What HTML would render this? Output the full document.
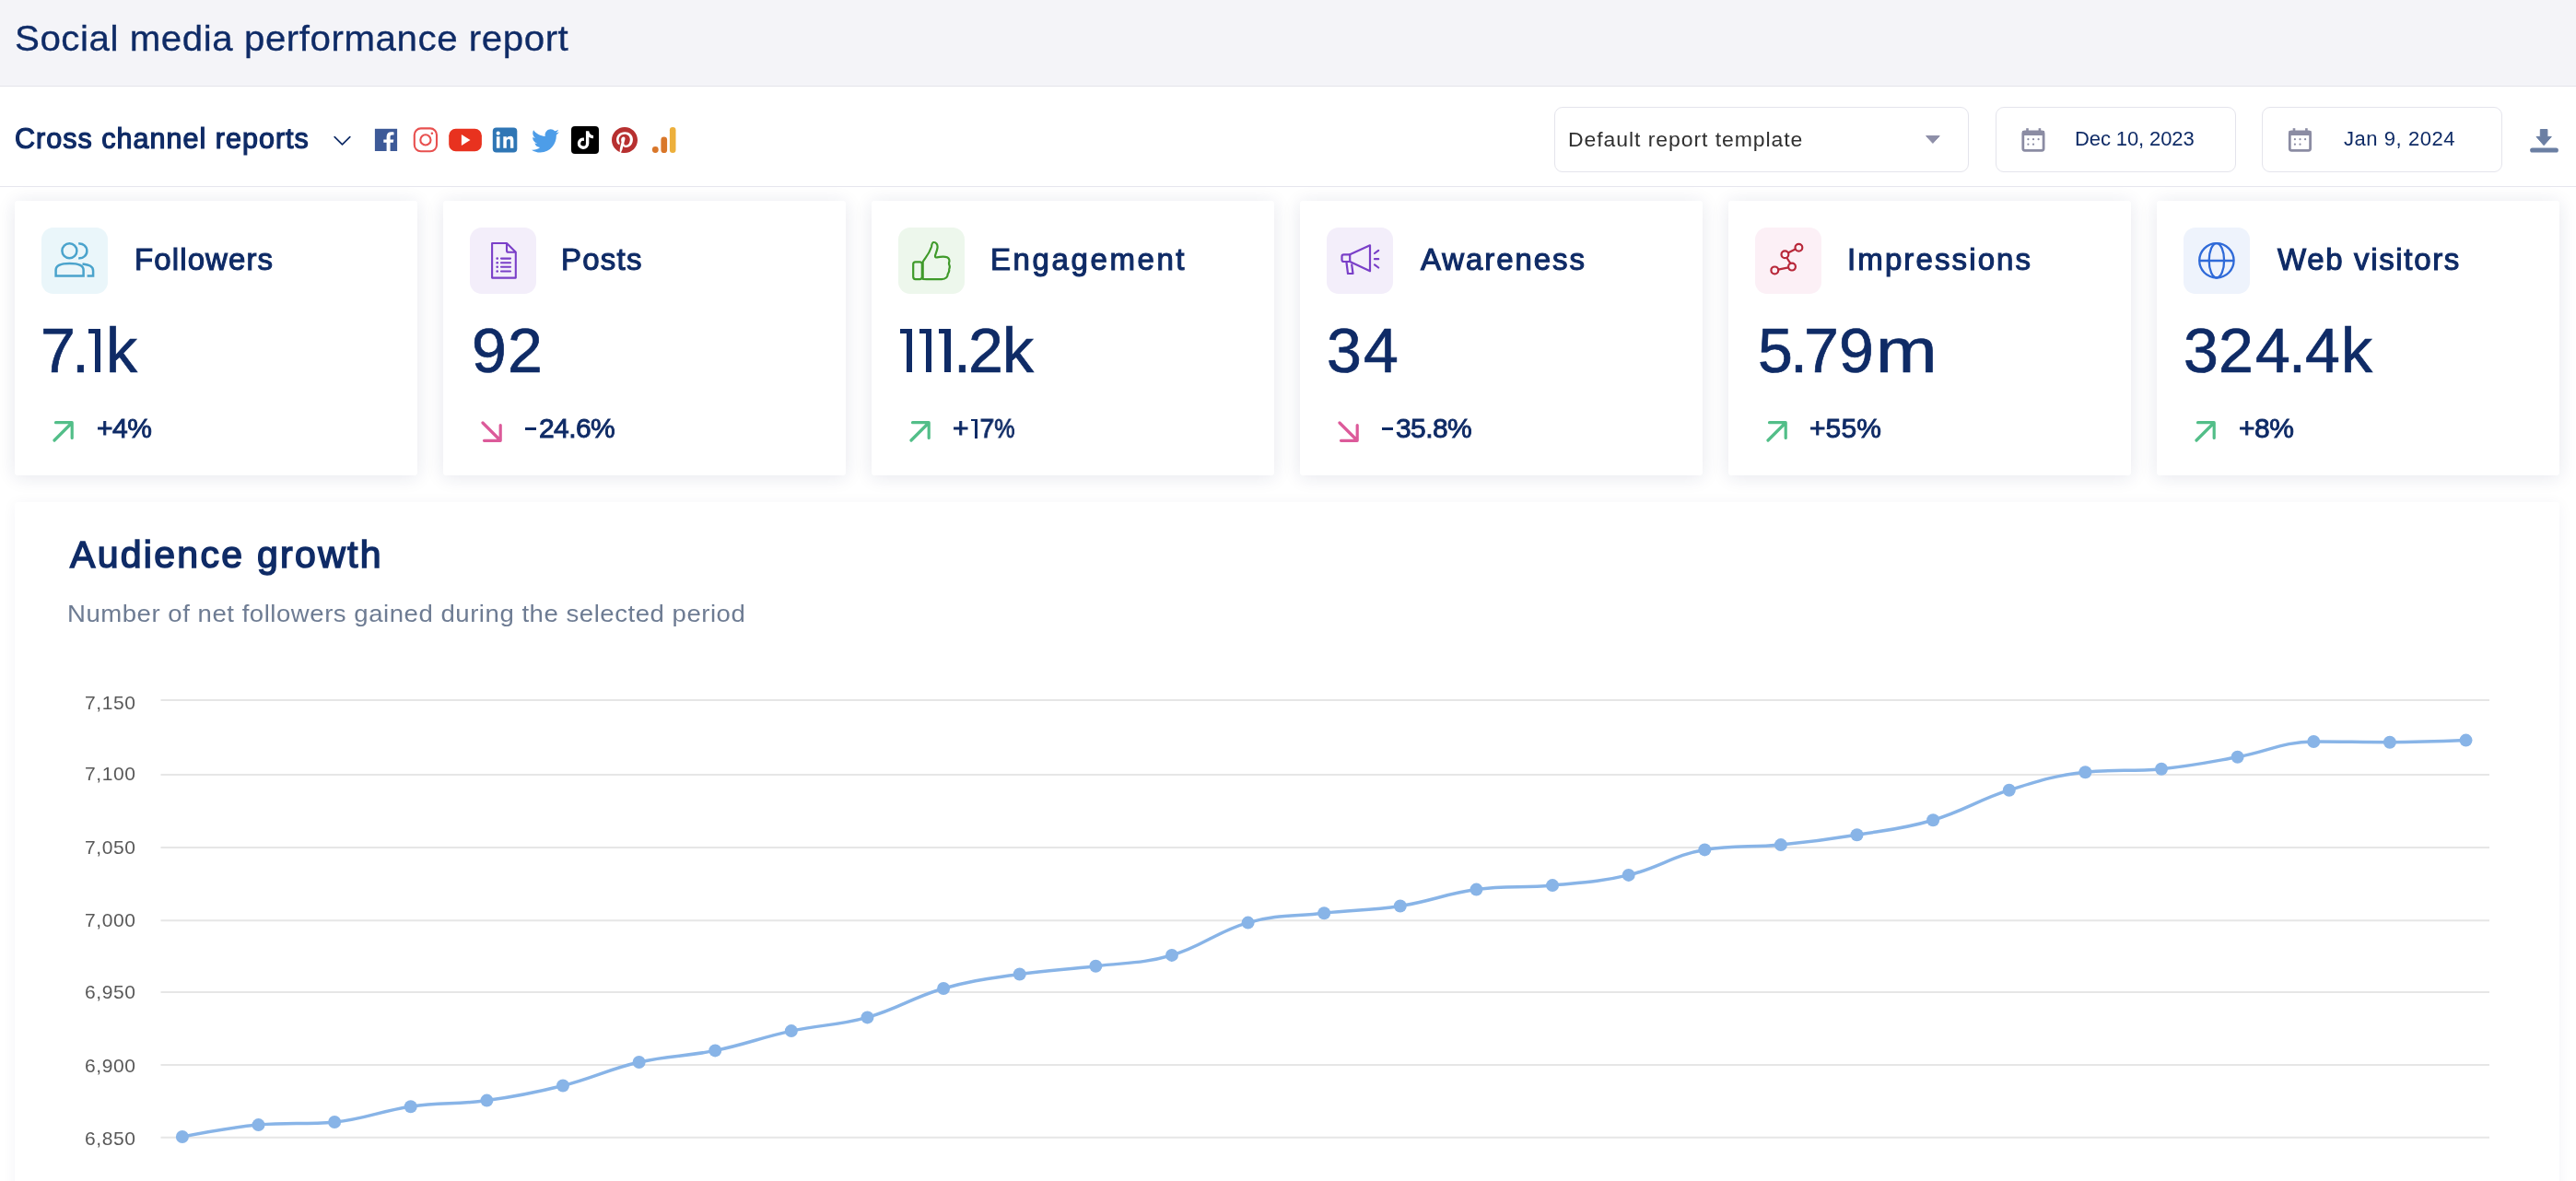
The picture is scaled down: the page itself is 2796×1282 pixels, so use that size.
<!DOCTYPE html>
<html><head><meta charset="utf-8">
<style>
*{box-sizing:border-box;margin:0;padding:0}
html,body{width:2796px;height:1282px;overflow:hidden;background:#fff;font-family:"Liberation Sans",sans-serif;color:#0f2b66}
.t{position:absolute;white-space:nowrap;will-change:transform}
.abs{position:absolute}
#hdr{position:absolute;left:0;top:0;width:2796px;height:94px;background:#f4f4f8;border-bottom:1px solid #e3e3ea}
#bar{position:absolute;left:0;top:94px;width:2796px;height:109px;background:#fff;border-bottom:1px solid #e6e6ee}
.sel{position:absolute;top:116px;height:71px;border:1px solid #e4e4ec;border-radius:9px;background:#fff}
.card{position:absolute;top:218px;width:437px;height:298px;background:#fff;border-radius:3px;box-shadow:0 2px 20px rgba(30,40,90,0.11)}
.ibox{position:absolute;top:247px;border-radius:13px}
.arr{position:absolute}
#chartcard{position:absolute;left:16px;top:545px;width:2762px;height:800px;background:#fff;border-radius:3px;box-shadow:0 2px 16px rgba(30,40,90,0.05)}
</style></head><body>
<div id="hdr"></div>
<div id="bar"></div>
<div class="sel" style="left:1687px;width:450px"></div>
<div class="sel" style="left:2166px;width:261px"></div>
<div class="sel" style="left:2455px;width:261px"></div>
<div class="card" style="left:16px"></div><svg class="ibox" style="left:45px;background:#eaf6fa" width="72" height="72" viewBox="0 0 72 72"><g fill="none" stroke="#4aa3cc" stroke-width="2.5" stroke-linecap="butt">
<circle cx="30.400000000000006" cy="25.30000000000001" r="8"/>
<path d="M40.2 17.600000000000023 A7.9 7.9 0 1 1 40.2 33.19999999999999"/>
<path d="M15.600000000000001 52.5 V46 C15.600000000000001 40 23 38.89999999999998 30.599999999999994 38.89999999999998 C38.2 38.89999999999998 45.599999999999994 40 45.599999999999994 46 V52.5 Z"/>
<path d="M44.5 39.5 C52 40.5 56.099999999999994 42 56.099999999999994 47 V52.5 H49.599999999999994"/>
</g></svg><svg class="arr" style="left:56.5px;top:456.5px" width="23" height="23" viewBox="0 0 23 23"><path d="M2 21 L21 2 M3.5 1.7 H21.2 V18.5" fill="none" stroke="#52be88" stroke-width="3.2" stroke-linecap="round" stroke-linejoin="round"/></svg><div class="card" style="left:481px"></div><svg class="ibox" style="left:510px;background:#f3eefa" width="72" height="72" viewBox="0 0 72 72"><g fill="none" stroke="#7a3fc8" stroke-width="2.1" stroke-linejoin="round">
<path d="M24.100000000000023 17 H40 L49.799999999999955 26.80000000000001 V54.60000000000002 H24.100000000000023 Z"/>
<path d="M40 17 V25 Q40 26.80000000000001 42 26.80000000000001 H49.799999999999955"/>
<g stroke-linecap="round"><path d="M34 33.60000000000002 H44 M34 38.19999999999999 H44 M34 42.80000000000001 H44 M34 47.5 H44"/></g>
</g>
<g fill="#7a3fc8"><circle cx="29.700000000000045" cy="33.60000000000002" r="1.3"/><circle cx="29.700000000000045" cy="38.19999999999999" r="1.3"/><circle cx="29.700000000000045" cy="42.80000000000001" r="1.3"/><circle cx="29.700000000000045" cy="47.5" r="1.3"/></g></svg><svg class="arr" style="left:521.5px;top:456.5px" width="23" height="23" viewBox="0 0 23 23"><path d="M2 2 L21 21 M3.5 21.3 H21.2 V4.5" fill="none" stroke="#dc5a9a" stroke-width="3.2" stroke-linecap="round" stroke-linejoin="round"/></svg><div class="card" style="left:946px"></div><svg class="ibox" style="left:975px;background:#edf7ec" width="72" height="72" viewBox="0 0 72 72"><g fill="none" stroke="#3f9a2a" stroke-width="2.2" stroke-linejoin="round">
<rect x="16.200000000000045" y="37.30000000000001" width="9.6" height="18.8" rx="2.5"/>
<path d="M26.700000000000045 37.30000000000001 C29 33 33 30 36 21 C36.5 17 37 16 38.5 16 C41 16 43 18.5 42.5 22 C42 26 40 29 40 31 C40 32.5 41 32.60000000000002 42 32.39999999999998 C45 31.80000000000001 48 31.600000000000023 51 31.80000000000001 C54 32 55.5 34 55.5 36.5 C55 38 54.5 39 55.5 41 C56.5 43 55 44.5 55.200000000000045 46 C55.59999999999991 48 54 49.5 53.59999999999991 50.80000000000001 C53.799999999999955 53 52 56 47 56.19999999999999 H31 L26.700000000000045 55.80000000000001 Z"/>
</g></svg><svg class="arr" style="left:986.5px;top:456.5px" width="23" height="23" viewBox="0 0 23 23"><path d="M2 21 L21 2 M3.5 1.7 H21.2 V18.5" fill="none" stroke="#52be88" stroke-width="3.2" stroke-linecap="round" stroke-linejoin="round"/></svg><div class="card" style="left:1411px"></div><svg class="ibox" style="left:1440px;background:#f3eefa" width="72" height="72" viewBox="0 0 72 72"><g fill="none" stroke="#7a3fc8" stroke-width="2.2" stroke-linejoin="round" stroke-linecap="round">
<path d="M25.200000000000045 29.30000000000001 H18.5 Q16.5 29.30000000000001 16.5 31.30000000000001 V35 Q16.5 37 18.5 37 H25.200000000000045 Z"/>
<path d="M25.200000000000045 29.30000000000001 L47 19.30000000000001 V47.30000000000001 L25.200000000000045 37"/>
<path d="M21.5 38 L23 50 H28.5 L27.200000000000045 40.30000000000001"/>
<path d="M52 28 L56.200000000000045 24.80000000000001 M52 34.19999999999999 H56.200000000000045 M52 40.30000000000001 L56.200000000000045 43.5"/>
</g></svg><svg class="arr" style="left:1451.5px;top:456.5px" width="23" height="23" viewBox="0 0 23 23"><path d="M2 2 L21 21 M3.5 21.3 H21.2 V4.5" fill="none" stroke="#dc5a9a" stroke-width="3.2" stroke-linecap="round" stroke-linejoin="round"/></svg><div class="card" style="left:1876px"></div><svg class="ibox" style="left:1905px;background:#fcf0f6" width="72" height="72" viewBox="0 0 72 72"><g fill="none" stroke="#b8283a" stroke-width="2.2">
<path d="M25 45.69999999999999 L36.200000000000045 43.30000000000001 M38.5 39.19999999999999 L34.5 33 M36.200000000000045 27.30000000000001 L43.59999999999991 23.5"/>
<circle cx="21.299999999999955" cy="46.39999999999998" r="3.9"/>
<circle cx="40" cy="42.60000000000002" r="3.9"/>
<circle cx="32.40000000000009" cy="29.30000000000001" r="3.9"/>
<circle cx="47.40000000000009" cy="21.80000000000001" r="3.9"/>
</g></svg><svg class="arr" style="left:1916.5px;top:456.5px" width="23" height="23" viewBox="0 0 23 23"><path d="M2 21 L21 2 M3.5 1.7 H21.2 V18.5" fill="none" stroke="#52be88" stroke-width="3.2" stroke-linecap="round" stroke-linejoin="round"/></svg><div class="card" style="left:2341px"></div><svg class="ibox" style="left:2370px;background:#eef3fc" width="72" height="72" viewBox="0 0 72 72"><g fill="none" stroke="#2f6ad8" stroke-width="2.3">
<circle cx="35.90000000000009" cy="35.80000000000001" r="18.7"/>
<path d="M17.5 36 H54.5"/>
<ellipse cx="35.90000000000009" cy="35.80000000000001" rx="8.2" ry="18.7"/>
</g></svg><svg class="arr" style="left:2381.5px;top:456.5px" width="23" height="23" viewBox="0 0 23 23"><path d="M2 21 L21 2 M3.5 1.7 H21.2 V18.5" fill="none" stroke="#52be88" stroke-width="3.2" stroke-linecap="round" stroke-linejoin="round"/></svg>
<div id="chartcard"></div>
<svg class="abs" style="left:0;top:0" width="2796" height="1282" viewBox="0 0 2796 1282">
<g stroke="#e6e6e6" stroke-width="2"><line x1="174.5" x2="2702" y1="760.0" y2="760.0"/><line x1="174.5" x2="2702" y1="841.0" y2="841.0"/><line x1="174.5" x2="2702" y1="920.0" y2="920.0"/><line x1="174.5" x2="2702" y1="999.2" y2="999.2"/><line x1="174.5" x2="2702" y1="1077.0" y2="1077.0"/><line x1="174.5" x2="2702" y1="1156.0" y2="1156.0"/><line x1="174.5" x2="2702" y1="1234.8" y2="1234.8"/></g>
<path d="M 197.90 1234.00 C 197.90 1234.00 247.47 1224.20 280.52 1221.10 C 313.57 1218.00 330.09 1221.10 363.14 1218.00 C 396.19 1214.90 412.71 1205.88 445.76 1201.20 C 478.81 1196.52 495.33 1199.14 528.38 1194.60 C 561.43 1190.06 577.95 1186.82 611.00 1178.50 C 644.05 1170.18 660.57 1160.62 693.62 1153.00 C 726.67 1145.38 743.19 1147.18 776.24 1140.40 C 809.29 1133.62 825.81 1126.30 858.86 1119.10 C 891.91 1111.90 908.43 1113.62 941.48 1104.40 C 974.53 1095.18 991.05 1082.38 1024.10 1073.00 C 1057.15 1063.62 1073.67 1062.34 1106.72 1057.50 C 1139.77 1052.66 1156.29 1052.92 1189.34 1048.80 C 1222.39 1044.68 1238.91 1046.34 1271.96 1036.90 C 1305.01 1027.46 1321.53 1010.74 1354.58 1001.60 C 1387.63 992.46 1404.15 994.82 1437.20 991.20 C 1470.25 987.58 1486.77 988.62 1519.82 983.50 C 1552.87 978.38 1569.39 970.08 1602.44 965.60 C 1635.49 961.12 1652.01 964.24 1685.06 961.10 C 1718.11 957.96 1734.63 957.64 1767.68 949.90 C 1800.73 942.16 1817.25 927.70 1850.30 922.40 C 1883.35 917.10 1899.87 920.32 1932.92 917.10 C 1965.97 913.88 1982.49 911.68 2015.54 906.30 C 2048.59 900.92 2065.11 899.92 2098.16 890.20 C 2131.21 880.48 2147.73 868.10 2180.78 857.70 C 2213.83 847.30 2230.35 841.70 2263.40 838.20 C 2296.45 834.70 2312.97 837.98 2346.02 834.70 C 2379.07 831.42 2395.59 827.74 2428.64 821.80 C 2461.69 815.86 2478.21 805.00 2511.26 805.00 C 2544.31 805.00 2560.83 805.70 2593.88 805.70 C 2626.93 805.70 2676.50 803.60 2676.50 803.60" fill="none" stroke="#88b4e7" stroke-width="3.5"/>
<g fill="#88b4e7"><circle cx="197.90" cy="1234.00" r="7"/><circle cx="280.52" cy="1221.10" r="7"/><circle cx="363.14" cy="1218.00" r="7"/><circle cx="445.76" cy="1201.20" r="7"/><circle cx="528.38" cy="1194.60" r="7"/><circle cx="611.00" cy="1178.50" r="7"/><circle cx="693.62" cy="1153.00" r="7"/><circle cx="776.24" cy="1140.40" r="7"/><circle cx="858.86" cy="1119.10" r="7"/><circle cx="941.48" cy="1104.40" r="7"/><circle cx="1024.10" cy="1073.00" r="7"/><circle cx="1106.72" cy="1057.50" r="7"/><circle cx="1189.34" cy="1048.80" r="7"/><circle cx="1271.96" cy="1036.90" r="7"/><circle cx="1354.58" cy="1001.60" r="7"/><circle cx="1437.20" cy="991.20" r="7"/><circle cx="1519.82" cy="983.50" r="7"/><circle cx="1602.44" cy="965.60" r="7"/><circle cx="1685.06" cy="961.10" r="7"/><circle cx="1767.68" cy="949.90" r="7"/><circle cx="1850.30" cy="922.40" r="7"/><circle cx="1932.92" cy="917.10" r="7"/><circle cx="2015.54" cy="906.30" r="7"/><circle cx="2098.16" cy="890.20" r="7"/><circle cx="2180.78" cy="857.70" r="7"/><circle cx="2263.40" cy="838.20" r="7"/><circle cx="2346.02" cy="834.70" r="7"/><circle cx="2428.64" cy="821.80" r="7"/><circle cx="2511.26" cy="805.00" r="7"/><circle cx="2593.88" cy="805.70" r="7"/><circle cx="2676.50" cy="803.60" r="7"/></g>
</svg>
<svg class="abs" style="left:0;top:94px" width="2796" height="108" viewBox="0 94 2796 108">
<path d="M363.2 148.6 L371.5 156.9 L379.8 148.6" fill="none" stroke="#0f2b66" stroke-width="1.7" stroke-linecap="round" stroke-linejoin="round"/>
<rect x="406.9" y="139.8" width="24.2" height="24.2" fill="#3d5a98"/>
<path d="M419.6 164 V154.8 H416.3 V151.4 H419.6 V148.6 C419.6 145 421.5 143.2 424.7 143.2 C426 143.2 427.5 143.4 427.5 143.4 V146.5 H425.8 C424.2 146.5 423.6 147.3 423.6 148.6 V151.4 H427.3 L426.8 154.8 H423.6 V164 Z" fill="#fff"/>
<rect x="449.8" y="139.4" width="24.2" height="24.9" rx="7" fill="none" stroke="#e8504f" stroke-width="2.1"/>
<circle cx="461.9" cy="151.9" r="5.6" fill="none" stroke="#e8504f" stroke-width="2.1"/>
<circle cx="468.9" cy="144.8" r="1.3" fill="#e8504f"/>
<rect x="487.2" y="139.8" width="35.7" height="24.4" rx="7.5" fill="#e8321f"/>
<path d="M500.9 146 L510.5 152 L500.9 158 Z" fill="#fff"/>
<rect x="534.8" y="138.4" width="26.5" height="27.2" rx="4" fill="#2f76b5"/>
<circle cx="540.7" cy="144.7" r="2.1" fill="#fff"/>
<rect x="538.9" y="148.2" width="3.6" height="12.5" fill="#fff"/>
<path d="M546.3 148.2 H549.8 V150 C550.6 148.7 552.2 147.8 554 147.8 C556.6 147.8 557.4 149.6 557.4 152.3 V160.7 H553.9 V153.3 C553.9 151.9 553.5 151 552.1 151 C550.6 151 549.8 152 549.8 153.6 V160.7 H546.3 Z" fill="#fff"/>
<g transform="translate(577,140.1) scale(0.0584,0.0611)"><path fill="#4d9de8" d="M459.37 151.716c.325 4.548.325 9.097.325 13.645 0 138.72-105.583 298.558-298.558 298.558-59.452 0-114.68-17.219-161.137-47.106 8.447.974 16.568 1.299 25.34 1.299 49.055 0 94.213-16.568 130.274-44.832-46.132-.975-84.792-31.188-98.112-72.772 6.498.974 12.995 1.624 19.818 1.624 9.421 0 18.843-1.3 27.614-3.573-48.081-9.747-84.143-51.98-84.143-102.985v-1.299c13.969 7.797 30.214 12.67 47.431 13.319-28.264-18.843-46.781-51.005-46.781-87.391 0-19.492 5.197-37.36 14.294-52.954 51.655 63.675 129.3 105.258 216.365 109.807-1.624-7.797-2.599-15.918-2.599-24.04 0-57.828 46.782-104.934 104.934-104.934 30.213 0 57.502 12.67 76.67 33.137 23.715-4.548 46.456-13.32 66.599-25.34-7.798 24.366-24.366 44.833-46.132 57.827 21.117-2.273 41.584-8.122 60.426-16.243-14.292 20.791-32.161 39.308-52.628 54.253z" transform="translate(0,-47)"/></g>
<rect x="620" y="137" width="30" height="29.9" rx="4" fill="#000"/>
<g transform="translate(626.8,142.2) scale(0.0385)"><path fill="#fff" d="M448,209.91a210.06,210.06,0,0,1-122.77-39.25V349.38A162.55,162.55,0,1,1,185,188.31V278.2a74.62,74.62,0,1,0,52.23,71.18V0l88,0a121.18,121.18,0,0,0,1.86,22.17h0A122.18,122.18,0,0,0,381,102.39a121.430,121.430,0,0,0,67,20.14Z"/></g>
<g transform="translate(664,138) scale(0.0565)"><path fill="#b73030" d="M496 256c0 137-111 248-248 248-25.6 0-50.2-3.9-73.4-11.1 10.1-16.5 25.2-43.500 30.8-65 3-11.6 15.4-59 15.4-59 8.1 15.4 31.7 28.5 56.8 28.5 74.8 0 128.7-68.8 128.7-154.3 0-81.9-66.9-143.2-152.9-143.2-107 0-163.9 71.8-163.9 150.1 0 36.4 19.4 81.7 50.3 96.1 4.700 2.200 7.200 1.200 8.300-3.300.8-3.4 5-20.3 6.9-28.1.6-2.5.3-4.7-1.7-7.1-10.1-12.5-18.3-35.3-18.3-56.6 0-54.7 41.4-107.6 112-107.6 60.9 0 103.6 41.5 103.6 100.9 0 67.1-33.9 113.6-78 113.6-24.3 0-42.6-20.1-36.7-44.8 7-29.5 20.5-61.3 20.5-82.6 0-19-10.2-34.9-31.4-34.9-24.9 0-44.9 25.7-44.9 60.2 0 22 7.4 36.8 7.4 36.8s-24.5 103.8-29 123.2c-5 21.4-3 51.6-.9 71.2C65.4 450.900 0 361.100 0 256 0 119 111 8 248 8s248 111 248 248z" transform="translate(0,-8)"/></g>
<circle cx="711.3" cy="162.5" r="3.4" fill="#d9772a"/>
<rect x="717.4" y="148.5" width="6.7" height="17.5" rx="3.35" fill="#d9772a"/>
<rect x="726.9" y="138" width="6.6" height="28" rx="3.3" fill="#edb03c"/>
<path d="M2090.6 147.6 H2105.2 L2097.9 155.4 Z" fill="#8e8fa8" stroke="#8e8fa8" stroke-width="1" stroke-linejoin="round"/>
<g id="cal1">
<rect x="2195.8" y="142.9" width="22.3" height="20.4" rx="2" fill="none" stroke="#8b8ca3" stroke-width="2.8"/>
<rect x="2195" y="142" width="24" height="5" fill="#8b8ca3"/>
<rect x="2199.2" y="139.2" width="2.6" height="4" fill="#8b8ca3"/>
<rect x="2212.6" y="139.2" width="2.6" height="4" fill="#8b8ca3"/>
<g fill="#8b8ca3"><circle cx="2201.4" cy="151.2" r="1.1"/><circle cx="2207" cy="151.2" r="1.1"/><circle cx="2212.6" cy="151.2" r="1.1"/><circle cx="2201.4" cy="156.7" r="1.1"/><circle cx="2207" cy="156.7" r="1.1"/></g>
</g>
<use href="#cal1" transform="translate(289.5,0)"/>
<path d="M2757.3 140.5 H2764.9 V148.4 H2769.3 L2761.1 157.7 L2753 148.4 H2757.3 Z" fill="#6b7fa3" stroke="#6b7fa3" stroke-width="1" stroke-linejoin="round"/>
<rect x="2746.1" y="160.4" width="30.8" height="5.1" rx="2.55" fill="#6b7fa3"/>
</svg>

<span class="t" style="left:16.48px;top:18.83px;font-size:38px;line-height:46px;color:#0f2b66;letter-spacing:0.518px;transform:scaleX(1.060);transform-origin:0 50%;-webkit-text-stroke:0.3px #0f2b66">Social media performance report</span><span class="t" style="left:16.10px;top:132.03px;font-size:30.5px;line-height:37px;color:#0f2b66;letter-spacing:1.025px;-webkit-text-stroke:1.2px #0f2b66">Cross channel reports</span><span class="t" style="left:1701.58px;top:138.68px;font-size:21.7px;line-height:26px;color:#2f2f2f;letter-spacing:0.880px;transform:scaleX(1.060);transform-origin:0 50%">Default report template</span><span class="t" style="left:2252.30px;top:138.37px;font-size:22px;line-height:26px;color:#0f2b66;letter-spacing:-0.109px">Dec 10, 2023</span><span class="t" style="left:2543.80px;top:138.27px;font-size:22px;line-height:26px;color:#0f2b66;letter-spacing:0.560px">Jan 9, 2024</span><span class="t" style="left:76.10px;top:578.19px;font-size:41px;line-height:49px;color:#0f2b66;letter-spacing:2.293px;-webkit-text-stroke:1.5px #0f2b66">Audience growth</span><span class="t" style="left:73.42px;top:650.11px;font-size:26.5px;line-height:32px;color:#6e7c93;letter-spacing:0.507px;transform:scaleX(1.040);transform-origin:0 50%">Number of net followers gained during the selected period</span><span class="t" style="left:146.20px;top:261.56px;font-size:33px;line-height:40px;color:#0f2b66;letter-spacing:1.113px;-webkit-text-stroke:1.1px #0f2b66">Followers</span><span class="t" style="left:104.50px;top:447.30px;font-size:30px;line-height:36px;color:#0f2b66;letter-spacing:-0.450px;-webkit-text-stroke:0.9px #0f2b66">+4%</span><span class="t" style="left:43.65px;top:339.33px;font-size:68px;line-height:82px;color:#0f2b66;-webkit-text-stroke:0.7px #0f2b66">7</span><span class="t" style="left:77.85px;top:339.33px;font-size:68px;line-height:82px;color:#0f2b66;-webkit-text-stroke:0.7px #0f2b66">.</span><span class="t" style="left:114.90px;top:339.33px;font-size:68px;line-height:82px;color:#0f2b66;-webkit-text-stroke:0.7px #0f2b66">k</span><span class="t" style="left:609.40px;top:261.56px;font-size:33px;line-height:40px;color:#0f2b66;letter-spacing:1.225px;-webkit-text-stroke:1.1px #0f2b66">Posts</span><span class="t" style="left:584.90px;top:447.30px;font-size:30px;line-height:36px;color:#0f2b66;letter-spacing:-0.600px;-webkit-text-stroke:0.9px #0f2b66">24.6%</span><span class="t" style="left:511.95px;top:339.33px;font-size:68px;line-height:82px;color:#0f2b66;-webkit-text-stroke:0.7px #0f2b66">9</span><span class="t" style="left:550.90px;top:339.33px;font-size:68px;line-height:82px;color:#0f2b66;-webkit-text-stroke:0.7px #0f2b66">2</span><span class="t" style="left:1074.50px;top:261.56px;font-size:33px;line-height:40px;color:#0f2b66;letter-spacing:2.600px;-webkit-text-stroke:1.1px #0f2b66">Engagement</span><span class="t" style="left:1033.90px;top:447.30px;font-size:30px;line-height:36px;color:#0f2b66;-webkit-text-stroke:0.9px #0f2b66">+</span><span class="t" style="left:1063.05px;top:447.30px;font-size:30px;line-height:36px;color:#0f2b66;transform:scaleX(0.940);transform-origin:8.50px 50%;-webkit-text-stroke:0.9px #0f2b66">7</span><span class="t" style="left:1077.30px;top:447.30px;font-size:30px;line-height:36px;color:#0f2b66;transform:scaleX(0.832);transform-origin:13.50px 50%;-webkit-text-stroke:0.9px #0f2b66">%</span><span class="t" style="left:1034.85px;top:339.33px;font-size:68px;line-height:82px;color:#0f2b66;-webkit-text-stroke:0.7px #0f2b66">.</span><span class="t" style="left:1050.90px;top:339.33px;font-size:68px;line-height:82px;color:#0f2b66;-webkit-text-stroke:0.7px #0f2b66">2</span><span class="t" style="left:1087.95px;top:339.33px;font-size:68px;line-height:82px;color:#0f2b66;-webkit-text-stroke:0.7px #0f2b66">k</span><span class="t" style="left:1541.90px;top:261.56px;font-size:33px;line-height:40px;color:#0f2b66;letter-spacing:1.912px;-webkit-text-stroke:1.1px #0f2b66">Awareness</span><span class="t" style="left:1514.50px;top:447.30px;font-size:30px;line-height:36px;color:#0f2b66;letter-spacing:-0.575px;-webkit-text-stroke:0.9px #0f2b66">35.8%</span><span class="t" style="left:1440.35px;top:339.33px;font-size:68px;line-height:82px;color:#0f2b66;-webkit-text-stroke:0.7px #0f2b66">3</span><span class="t" style="left:1480.45px;top:339.33px;font-size:68px;line-height:82px;color:#0f2b66;-webkit-text-stroke:0.7px #0f2b66">4</span><span class="t" style="left:2005.20px;top:261.56px;font-size:33px;line-height:40px;color:#0f2b66;letter-spacing:2.120px;-webkit-text-stroke:1.1px #0f2b66">Impressions</span><span class="t" style="left:1964.40px;top:447.30px;font-size:30px;line-height:36px;color:#0f2b66;letter-spacing:0.100px;-webkit-text-stroke:0.9px #0f2b66">+55%</span><span class="t" style="left:1907.70px;top:339.33px;font-size:68px;line-height:82px;color:#0f2b66;-webkit-text-stroke:0.7px #0f2b66">5</span><span class="t" style="left:1943.25px;top:339.33px;font-size:68px;line-height:82px;color:#0f2b66;-webkit-text-stroke:0.7px #0f2b66">.</span><span class="t" style="left:1958.10px;top:339.33px;font-size:68px;line-height:82px;color:#0f2b66;-webkit-text-stroke:0.7px #0f2b66">7</span><span class="t" style="left:1996.30px;top:339.33px;font-size:68px;line-height:82px;color:#0f2b66;-webkit-text-stroke:0.7px #0f2b66">9</span><span class="t" style="left:2040.50px;top:339.33px;font-size:68px;line-height:82px;color:#0f2b66;transform:scaleX(1.176);transform-origin:28.50px 50%;-webkit-text-stroke:0.7px #0f2b66">m</span><span class="t" style="left:2472.30px;top:261.56px;font-size:33px;line-height:40px;color:#0f2b66;letter-spacing:1.655px;-webkit-text-stroke:1.1px #0f2b66">Web visitors</span><span class="t" style="left:2429.50px;top:447.30px;font-size:30px;line-height:36px;color:#0f2b66;letter-spacing:-0.450px;-webkit-text-stroke:0.9px #0f2b66">+8%</span><span class="t" style="left:2370.35px;top:339.33px;font-size:68px;line-height:82px;color:#0f2b66;-webkit-text-stroke:0.7px #0f2b66">3</span><span class="t" style="left:2408.10px;top:339.33px;font-size:68px;line-height:82px;color:#0f2b66;-webkit-text-stroke:0.7px #0f2b66">2</span><span class="t" style="left:2447.80px;top:339.33px;font-size:68px;line-height:82px;color:#0f2b66;-webkit-text-stroke:0.7px #0f2b66">4</span><span class="t" style="left:2483.50px;top:339.33px;font-size:68px;line-height:82px;color:#0f2b66;-webkit-text-stroke:0.7px #0f2b66">.</span><span class="t" style="left:2502.10px;top:339.33px;font-size:68px;line-height:82px;color:#0f2b66;-webkit-text-stroke:0.7px #0f2b66">4</span><span class="t" style="left:2540.65px;top:339.33px;font-size:68px;line-height:82px;color:#0f2b66;-webkit-text-stroke:0.7px #0f2b66">k</span><span class="t" style="left:92.30px;top:750.02px;font-size:21px;line-height:25px;color:#595959;letter-spacing:0.625px">7,150</span><span class="t" style="left:92.30px;top:827.02px;font-size:21px;line-height:25px;color:#595959;letter-spacing:0.625px">7,100</span><span class="t" style="left:92.30px;top:907.22px;font-size:21px;line-height:25px;color:#595959;letter-spacing:0.625px">7,050</span><span class="t" style="left:92.30px;top:986.12px;font-size:21px;line-height:25px;color:#595959;letter-spacing:0.625px">7,000</span><span class="t" style="left:92.30px;top:1064.22px;font-size:21px;line-height:25px;color:#595959;letter-spacing:0.625px">6,950</span><span class="t" style="left:92.30px;top:1143.52px;font-size:21px;line-height:25px;color:#595959;letter-spacing:0.625px">6,900</span><span class="t" style="left:92.30px;top:1223.22px;font-size:21px;line-height:25px;color:#595959;letter-spacing:0.625px">6,850</span>
<div class="abs" style="left:102.75px;top:356.60px;width:6.35px;height:47.30px;background:#0f2b66"></div><div class="abs" style="left:96.40px;top:356.60px;width:6.65px;height:5.68px;background:#0f2b66"></div><div class="abs" style="left:1057.55px;top:454.80px;width:3.25px;height:21.10px;background:#0f2b66"></div><div class="abs" style="left:1054.30px;top:454.80px;width:3.55px;height:2.53px;background:#0f2b66"></div><div class="abs" style="left:983.65px;top:356.60px;width:6.35px;height:47.30px;background:#0f2b66"></div><div class="abs" style="left:977.30px;top:356.60px;width:6.65px;height:5.68px;background:#0f2b66"></div><div class="abs" style="left:1004.55px;top:356.60px;width:6.45px;height:47.30px;background:#0f2b66"></div><div class="abs" style="left:998.10px;top:356.60px;width:6.75px;height:5.68px;background:#0f2b66"></div><div class="abs" style="left:1025.40px;top:356.60px;width:6.40px;height:47.30px;background:#0f2b66"></div><div class="abs" style="left:1019.00px;top:356.60px;width:6.70px;height:5.68px;background:#0f2b66"></div><div class="abs" style="left:570.10px;top:463.90px;width:11.90px;height:3.00px;background:#0f2b66"></div><div class="abs" style="left:1499.70px;top:463.90px;width:11.90px;height:3.00px;background:#0f2b66"></div>
</body></html>
